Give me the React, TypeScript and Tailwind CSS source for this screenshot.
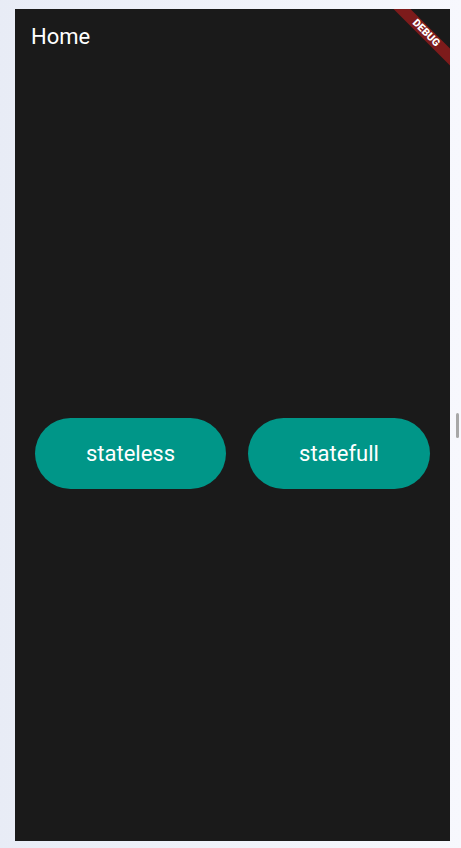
const font = { fontFamily: 'Roboto, "Noto Sans", sans-serif' }

export default function App() {
  return (
    <div
      className="relative flex h-[848px] w-[461px] bg-gradient-to-r from-[#e8ecf6] to-[#f7f8fd] pb-[7px] pl-[15px] pr-[11px] pt-[9px]"
      style={font}
    >
      <main className="relative flex flex-1 flex-col overflow-hidden bg-[#1a1a1a]">
        <header className="flex h-14 items-center px-4">
          <h1 className="text-[22px] leading-7 text-white">Home</h1>
        </header>

        <div className="flex flex-1 items-center gap-[22px] pl-5">
          <button
            type="button"
            className="flex h-[71px] w-[191px] items-center justify-center rounded-full bg-[#009688] text-[22px] text-white"
          >
            stateless
          </button>
          <button
            type="button"
            className="flex h-[71px] w-[182px] items-center justify-center rounded-full bg-[#009688] text-[22px] text-white"
          >
            statefull
          </button>
        </div>

        <div className="absolute left-[351px] top-[18px] flex h-3 w-[120px] rotate-45 items-center justify-center bg-[#7d1b1b]">
          <span className="text-[10.5px] font-black leading-none text-white">DEBUG</span>
        </div>
      </main>

      <div className="absolute left-[456px] top-[413px] h-[25px] w-[3px] rounded-sm bg-[#a8a8a8]" />
    </div>
  )
}
